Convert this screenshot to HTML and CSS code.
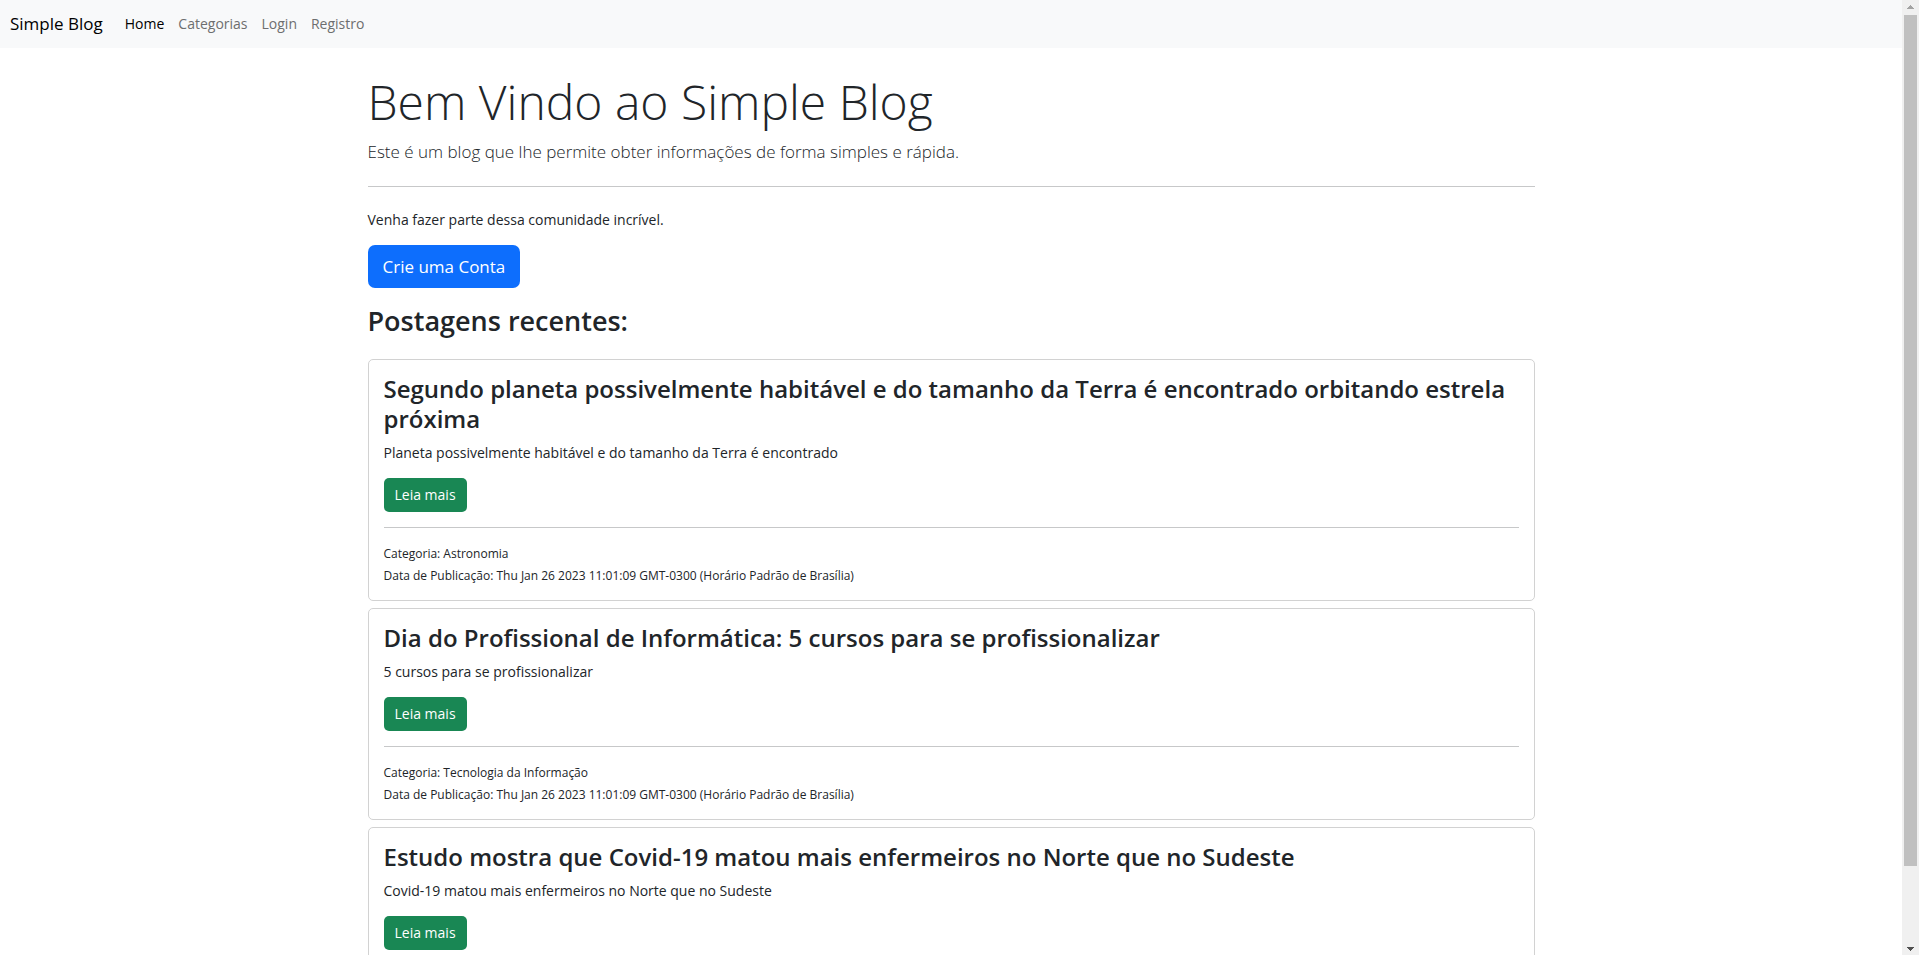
FILE: index.html
```html
<!DOCTYPE html>
<html lang="pt-BR">
<head>
<meta charset="utf-8">
<title>Simple Blog</title>
<link rel="stylesheet" href="styles.css">
</head>
<body>
<div class="page">
  <nav class="navbar">
    <a class="brand" href="#">Simple Blog</a>
    <ul class="menu">
      <li><a class="link active" href="#">Home</a></li>
      <li><a class="link" href="#">Categorias</a></li>
      <li><a class="link" href="#">Login</a></li>
      <li><a class="link" href="#">Registro</a></li>
    </ul>
  </nav>
  <main class="container">
    <header class="hero">
      <h1 class="display">Bem Vindo ao Simple Blog</h1>
      <p class="lead">Este é um blog que lhe permite obter informações de forma simples e rápida.</p>
      <hr class="rule hero-rule">
      <p class="text">Venha fazer parte dessa comunidade incrível.</p>
      <a class="btn btn-primary" href="#">Crie uma Conta</a>
    </header>
    <h2 class="heading">Postagens recentes:</h2>
    <div class="posts">
      <article class="card">
        <h3 class="title">Segundo planeta possivelmente habitável e do tamanho da Terra é encontrado orbitando estrela próxima</h3>
        <p class="text">Planeta possivelmente habitável e do tamanho da Terra é encontrado</p>
        <a class="btn btn-success" href="#">Leia mais</a>
        <hr class="rule">
        <small class="meta">Categoria: Astronomia</small>
        <small class="meta">Data de Publicação: Thu Jan 26 2023 11:01:09 GMT-0300 (Horário Padrão de Brasília)</small>
      </article>
      <article class="card">
        <h3 class="title">Dia do Profissional de Informática: 5 cursos para se profissionalizar</h3>
        <p class="text">5 cursos para se profissionalizar</p>
        <a class="btn btn-success" href="#">Leia mais</a>
        <hr class="rule">
        <small class="meta">Categoria: Tecnologia da Informação</small>
        <small class="meta">Data de Publicação: Thu Jan 26 2023 11:01:09 GMT-0300 (Horário Padrão de Brasília)</small>
      </article>
      <article class="card">
        <h3 class="title">Estudo mostra que Covid-19 matou mais enfermeiros no Norte que no Sudeste</h3>
        <p class="text">Covid-19 matou mais enfermeiros no Norte que no Sudeste</p>
        <a class="btn btn-success" href="#">Leia mais</a>
      </article>
    </div>
  </main>
</div>
<div class="scrollbar" aria-hidden="true">
  <svg class="arrow" viewBox="0 0 17 15"><path fill="#a3a3a3" d="M8 5h1v1h1v1h1v1h1v1H5V8h1V7h1V6h1z"/></svg>
  <div class="track"><div class="thumb"></div></div>
  <svg class="arrow" viewBox="0 0 17 15"><path fill="#505050" d="M5 7h7v1h-1v1h-1v1H9v1H8v-1H7V9H6V8H5z"/></svg>
</div>
</body>
</html>
```

FILE: styles.css
```css
* {
  box-sizing: border-box;
}

body {
  margin: 0;
  height: 100vh;
  display: flex;
  overflow: hidden;
  font-family: "Segoe UI", "Open Sans", "Noto Sans", sans-serif;
  font-size: 14px;
  line-height: 22px;
  color: #212529;
  background: #fff;
}

a {
  color: inherit;
  text-decoration: none;
}

h1, h2, h3, p, ul {
  margin: 0;
  padding: 0;
}

.page {
  flex: 1;
  min-width: 0;
  overflow: hidden;
}

.navbar {
  display: flex;
  align-items: center;
  gap: 22px;
  height: 48px;
  padding: 0 10px;
  background: #f8f9fa;
}

.brand {
  font-size: 17px;
  color: #000;
}

.menu {
  display: flex;
  gap: 14px;
  list-style: none;
}

.link {
  color: #6d6e6f;
}

.active {
  color: #000;
}

.container {
  max-width: 1167px;
  margin: 0 auto;
}

.hero {
  padding-top: 24px;
}

.display {
  margin-bottom: 6px;
  font-size: 48px;
  line-height: 60px;
  font-weight: 300;
}

.lead {
  font-size: 17px;
  line-height: 27px;
  font-weight: 300;
}

.rule {
  height: 1px;
  margin: 15px 0;
  border: 0;
  background: #c7c8c9;
}

.hero-rule {
  margin: 21px 0 22px;
}

.text {
  margin-bottom: 14px;
}

.btn {
  display: block;
  width: fit-content;
  color: #fff;
}

.btn-primary {
  padding: 8px 15px;
  font-size: 17px;
  line-height: 27px;
  border-radius: 7px;
  background: #0d6efd;
}

.btn-success {
  padding: 6px 11px;
  border-radius: 5px;
  background: #198754;
}

.heading {
  margin: 15px 0 21px;
  font-size: 27px;
  line-height: 35px;
  font-weight: 600;
}

.posts {
  display: grid;
  gap: 7px;
}

.card {
  padding: 14px 15px 13px;
  border: 1px solid #d2d2d2;
  border-radius: 5px;
}

.title {
  margin-bottom: 8px;
  font-size: 24px;
  line-height: 30px;
  font-weight: 600;
}

.meta {
  display: block;
  font-size: 12px;
}

.scrollbar {
  display: flex;
  flex-direction: column;
  width: 17px;
  background: #f0f0f0;
}

.arrow {
  width: 17px;
  height: 15px;
}

.track {
  flex: 1;
  padding: 0 2px;
}

.thumb {
  height: 92%;
  background: #c0c0c0;
}
```
